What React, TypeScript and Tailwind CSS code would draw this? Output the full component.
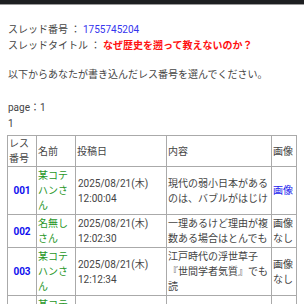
import React from "react";

type Post = {
  no: string;
  name: string;
  date: string;
  time: string;
  body: string;
  hasImage: boolean;
};

const posts: Post[] = [
  {
    no: "001",
    name: "某コテハンさん",
    date: "2025/08/21(木)",
    time: "12:00:04",
    body: "現代の弱小日本があるのは、バブルがはじけ",
    hasImage: true,
  },
  {
    no: "002",
    name: "名無しさん",
    date: "2025/08/21(木)",
    time: "12:02:30",
    body: "一理あるけど理由が複数ある場合はとんでも",
    hasImage: false,
  },
  {
    no: "003",
    name: "某コテハンさん",
    date: "2025/08/21(木)",
    time: "12:12:34",
    body: "江戸時代の浮世草子『世間学者気質』でも読",
    hasImage: false,
  },
  {
    no: "004",
    name: "某コテハンさん",
    date: "2025/08/21(木)",
    time: "12:20:11",
    body: "歴史は近現代から遡って教えた方が理解しや",
    hasImage: false,
  },
];

export default function App() {
  return (
    <div
      className="w-[304px] h-[304px] overflow-hidden bg-white text-[10px] text-[#444]"
      style={{ fontFamily: '"Roboto", "Noto Sans CJK JP", sans-serif' }}
    >
      {/* top bar */}
      <div className="h-[5px] bg-[#1d1f21] border-b border-[#9a9a9a]" />

      <div className="pl-[8px] pt-[17px] leading-[16px]">
        <p>
          スレッド番号 ： <span className="text-[#3535ee]">1755745204</span>
        </p>
        <p>
          スレッドタイトル ：{" "}
          <span className="text-[#ff1111] font-bold">なぜ歴史を遡って教えないのか？</span>
        </p>
        <p className="mt-[13px]">以下からあなたが書き込んだレス番号を選んでください。</p>
        <p className="mt-[17px]">page：1</p>
        <p className="leading-[15px]">1</p>
      </div>

      {/* post table */}
      <table className="mt-[4px] ml-[7px] w-[289px] table-fixed border-collapse leading-[15px]">
        <colgroup>
          <col className="w-[29px]" />
          <col className="w-[39px]" />
          <col className="w-[91px]" />
          <col className="w-[105px]" />
          <col className="w-[25px]" />
        </colgroup>
        <thead>
          <tr>
            <th className="border border-[#aaa] px-[1px] font-normal text-left align-middle">
              レス番号
            </th>
            <th className="border border-[#aaa] px-[1px] font-normal text-left align-middle">名前</th>
            <th className="border border-[#aaa] px-[1px] font-normal text-left align-middle">投稿日</th>
            <th className="border border-[#aaa] px-[1px] font-normal text-left align-middle">内容</th>
            <th className="border border-[#aaa] px-[1px] font-normal text-left align-middle">画像</th>
          </tr>
        </thead>
        <tbody>
          {posts.map((p) => (
            <tr key={p.no}>
              <td className="border border-[#aaa] px-[1px] py-[1px] text-center align-middle font-bold text-[#1010ee]">
                {p.no}
              </td>
              <td className="border border-[#aaa] px-[1px] py-[1px] align-middle text-[#1f961f]">
                {p.name}
              </td>
              <td className="border border-[#aaa] px-[2px] py-[1px] align-middle">
                {p.date} {p.time}
              </td>
              <td className="border border-[#aaa] px-[1px] py-[1px] align-middle">{p.body}</td>
              <td className="border border-[#aaa] px-[1px] py-[1px] align-middle">
                {p.hasImage ? <span className="text-[#2222ee]">画像</span> : "画像なし"}
              </td>
            </tr>
          ))}
        </tbody>
      </table>
    </div>
  );
}
